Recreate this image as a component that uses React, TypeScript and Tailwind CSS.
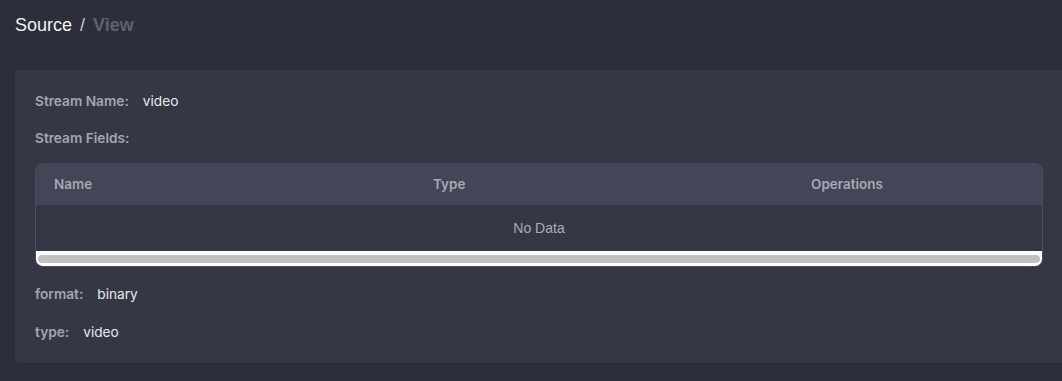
import React from "react";

const columns = [
  { title: "Name", w: "w-[379px]" },
  { title: "Type", w: "w-[378px]" },
  { title: "Operations", w: "flex-1" },
];

const Field: React.FC<{ label: string; value?: string }> = ({ label, value }) => (
  <div className="flex items-center h-[17px] text-[13.7px]">
    <span className="font-semibold text-[#a3a6b0]">{label}</span>
    {value && <span className="ml-[14px] text-[#e8e9ec]">{value}</span>}
  </div>
);

export default function App() {
  return (
    <div className="min-h-[381px] w-full overflow-hidden bg-[#2c2e39] font-['Inter',sans-serif]">
      <div className="pl-[15px] pt-[14px] h-[70px] font-['Liberation_Sans',Arial,sans-serif] text-[18px] leading-[22px]">
        <span className="text-[#f1f2f4]">Source</span>
        <span className="mx-[8px] text-[#c9cbd1]">/</span>
        <span className="font-bold text-[#5a6275]">View</span>
      </div>

      <div className="ml-[15px] w-[1066px] rounded-[4px] bg-[#353844] px-[20px] pt-[23px] pb-[22px]">
        <Field label="Stream Name:" value="video" />
        <div className="mt-[20px]">
          <Field label="Stream Fields:" />
        </div>

        <div className="mt-[16px] w-[1008px] overflow-hidden rounded-[8px] border-l border-r border-b border-[#4a4e5d]">
          <div className="flex h-[42px] items-center bg-[#424656] text-[13.5px] font-semibold text-[#a6a9b3]">
            {columns.map((c) => (
              <div key={c.title} className={`${c.w} pl-[18px]`}>
                {c.title}
              </div>
            ))}
          </div>
          <div className="flex h-[46px] items-center justify-center bg-[#353844] font-['Liberation_Sans',Arial,sans-serif] text-[14px] text-[#a9acb5]">
            No Data
          </div>
          <div className="h-[15px] bg-white px-[2px] pt-[4px]">
            <div className="h-[8px] rounded-full bg-[#c1c1c1]" />
          </div>
        </div>

        <div className="mt-[19px]">
          <Field label="format:" value="binary" />
        </div>
        <div className="mt-[21px]">
          <Field label="type:" value="video" />
        </div>
      </div>
    </div>
  );
}
